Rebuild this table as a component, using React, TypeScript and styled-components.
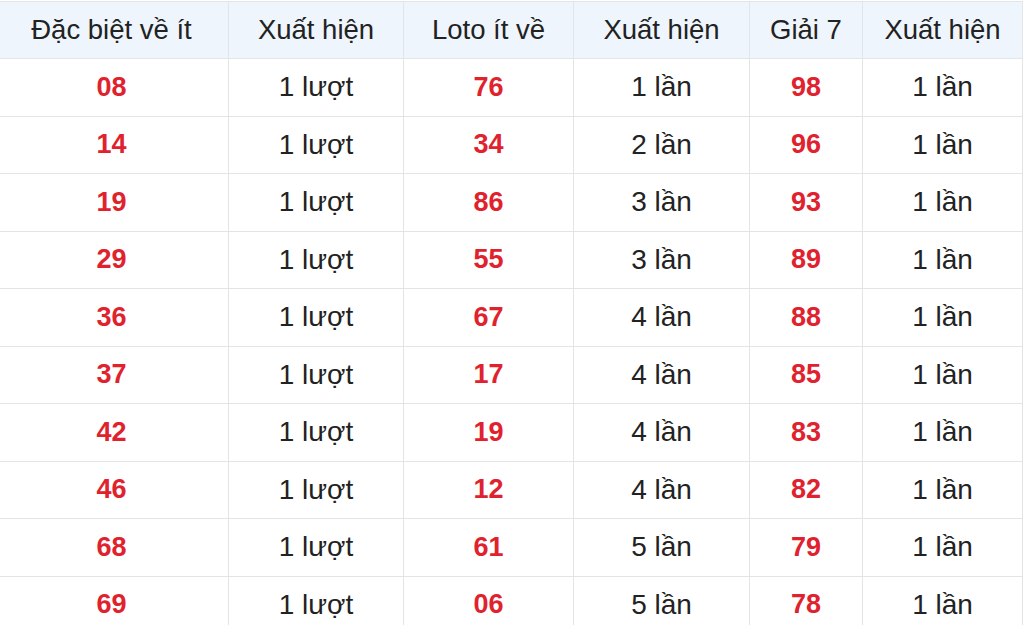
import React from "react";
import styled, { createGlobalStyle } from "styled-components";

const GlobalStyle = createGlobalStyle`
  html, body {
    margin: 0;
    padding: 0;
    background: #ffffff;
  }
  body {
    font-family: "Liberation Sans", Arial, Helvetica, sans-serif;
  }
`;

const Page = styled.div`
  width: 1024px;
  height: 625px;
  overflow: hidden;
  padding-top: 1px;
`;

const Table = styled.table`
  width: 1028px;
  margin-left: -6px;
  border-collapse: collapse;
  table-layout: fixed;
`;

const HeadCell = styled.th`
  height: 56px;
  padding: 0;
  background: #eef5fd;
  border: 1px solid #e2e5ea;
  color: #222222;
  font-size: 27.5px;
  font-weight: 400;
  text-align: center;
  white-space: nowrap;
`;

const Cell = styled.td<{ $accent?: boolean }>`
  height: 56.5px;
  padding: 0;
  border: 1px solid #e4e4e4;
  text-align: center;
  font-size: ${(p) => (p.$accent ? "27px" : "28px")};
  font-weight: ${(p) => (p.$accent ? 700 : 400)};
  color: ${(p) => (p.$accent ? "#e0222e" : "#222222")};
  white-space: nowrap;
`;

const widths = [234, 175, 170, 176, 113, 160];
const headers = ["Đặc biệt về ít", "Xuất hiện", "Loto ít về", "Xuất hiện", "Giải 7", "Xuất hiện"];

const rows: [string, string, string, string, string, string][] = [
  ["08", "1 lượt", "76", "1 lần", "98", "1 lần"],
  ["14", "1 lượt", "34", "2 lần", "96", "1 lần"],
  ["19", "1 lượt", "86", "3 lần", "93", "1 lần"],
  ["29", "1 lượt", "55", "3 lần", "89", "1 lần"],
  ["36", "1 lượt", "67", "4 lần", "88", "1 lần"],
  ["37", "1 lượt", "17", "4 lần", "85", "1 lần"],
  ["42", "1 lượt", "19", "4 lần", "83", "1 lần"],
  ["46", "1 lượt", "12", "4 lần", "82", "1 lần"],
  ["68", "1 lượt", "61", "5 lần", "79", "1 lần"],
  ["69", "1 lượt", "06", "5 lần", "78", "1 lần"],
];

const App: React.FC = () => (
  <>
    <GlobalStyle />
    <Page>
      <Table>
        <colgroup>
          {widths.map((w, i) => (
            <col key={i} style={{ width: w }} />
          ))}
        </colgroup>
        <thead>
          <tr>
            {headers.map((h, i) => (
              <HeadCell key={i}>{h}</HeadCell>
            ))}
          </tr>
        </thead>
        <tbody>
          {rows.map((r, i) => (
            <tr key={i}>
              {r.map((v, j) => (
                <Cell key={j} $accent={j % 2 === 0}>
                  {v}
                </Cell>
              ))}
            </tr>
          ))}
        </tbody>
      </Table>
    </Page>
  </>
);

export default App;
